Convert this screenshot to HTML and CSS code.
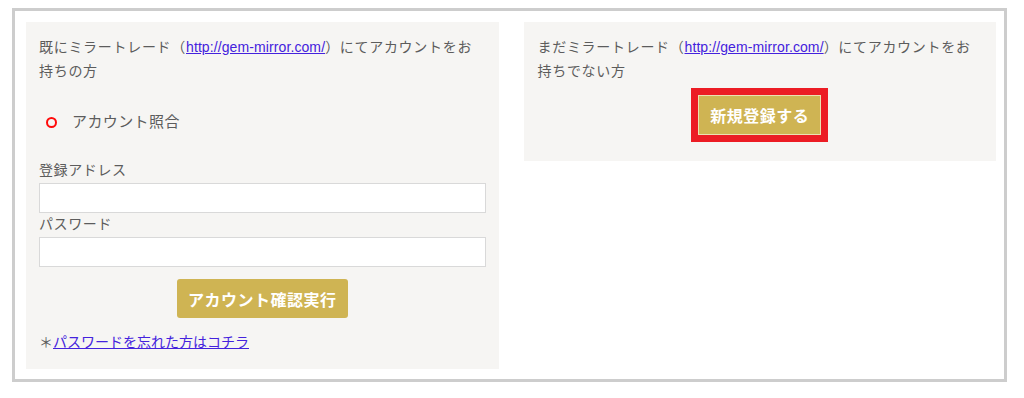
FILE: index.html
```html
<!DOCTYPE html>
<html lang="ja">
<head>
<meta charset="utf-8">
<title>アカウント</title>
<link rel="stylesheet" href="styles.css">
</head>
<body>
<div class="frame">
  <section class="panel panel-login">
    <p class="lead">既にミラートレード（<a href="#">http://gem-mirror.com/</a>）にてアカウントをお<br>持ちの方</p>
    <div class="radio-row">
      <span class="radio"></span>
      <span class="radio-label">アカウント照合</span>
    </div>
    <label class="field-label first">登録アドレス</label>
    <input class="field" type="text">
    <label class="field-label">パスワード</label>
    <input class="field" type="password">
    <div class="btn-row">
      <button class="btn btn-confirm">アカウント確認実行</button>
    </div>
    <p class="forgot">＊<a href="#">パスワードを忘れた方はコチラ</a></p>
  </section>
  <section class="panel panel-new">
    <p class="lead">まだミラートレード（<a href="#">http://gem-mirror.com/</a>）にてアカウントをお<br>持ちでない方</p>
    <div class="btn-row btn-row-new">
      <span class="highlight"><button class="btn btn-register">新規登録する</button></span>
    </div>
  </section>
</div>
</body>
</html>
```
FILE: styles.css
```css
html, body {
  margin: 0;
  padding: 0;
  background: #ffffff;
}
body {
  font-family: "Liberation Sans", "Noto Sans CJK JP", sans-serif;
  color: #5c5c5c;
  font-size: 14px;
}
.frame {
  margin: 8px 17px 0 12px;
  border: 3px solid #cdcdcd;
  padding: 11px 8px 10px 11px;
  display: grid;
  grid-template-columns: 1fr 1fr;
  column-gap: 25px;
  align-items: start;
}
.panel {
  background: #f6f5f3;
}
.panel-login {
  padding: 13px 13px 15px 13px;
}
.panel-new {
  padding: 13px 14px 19px 14px;
}
.lead {
  margin: 0;
  line-height: 24px;
  letter-spacing: 0.7px;
}
.lead a {
  letter-spacing: 0.1px;
}
a {
  color: #4422dd;
  text-decoration: underline;
}
.radio-row {
  margin-top: 27px;
  height: 24px;
  display: flex;
  align-items: center;
  gap: 15px;
  padding-left: 7px;
}
.radio {
  width: 11px;
  height: 11px;
  box-sizing: border-box;
  border: 2px solid #ff0a0a;
  border-radius: 50%;
  flex: none;
}
.radio-label {
  font-size: 15px;
  letter-spacing: 0.4px;
  line-height: 24px;
}
.field-label {
  display: block;
  line-height: 22px;
  letter-spacing: 0.6px;
}
.field-label.first {
  margin-top: 25px;
}
.field {
  display: block;
  width: 100%;
  height: 30px;
  box-sizing: border-box;
  margin: 2px 0 0;
  border: 1px solid #d9d9d9;
  background: #ffffff;
  padding: 0 6px;
  font: inherit;
}
.btn-row {
  margin-top: 12px;
  display: flex;
  justify-content: center;
}
.btn {
  font-family: "Liberation Sans", "Noto Sans CJK JP", sans-serif;
  font-size: 16px;
  font-weight: bold;
  color: #ffffff;
  background: #cfb453;
  letter-spacing: 0.5px;
  cursor: pointer;
}
.btn-confirm {
  height: 39px;
  padding: 0 11px;
  border: none;
  border-radius: 3px;
}
.forgot {
  margin: 12px 0 0;
  line-height: 24px;
}
.btn-row-new {
  margin-top: 5px;
}
.highlight {
  display: inline-block;
  border: 7px solid #ec1c24;
}
.btn-register {
  display: block;
  height: 40px;
  padding: 0 11px;
  border: 1px solid #ebe1b2;
  border-radius: 0;
}
```
